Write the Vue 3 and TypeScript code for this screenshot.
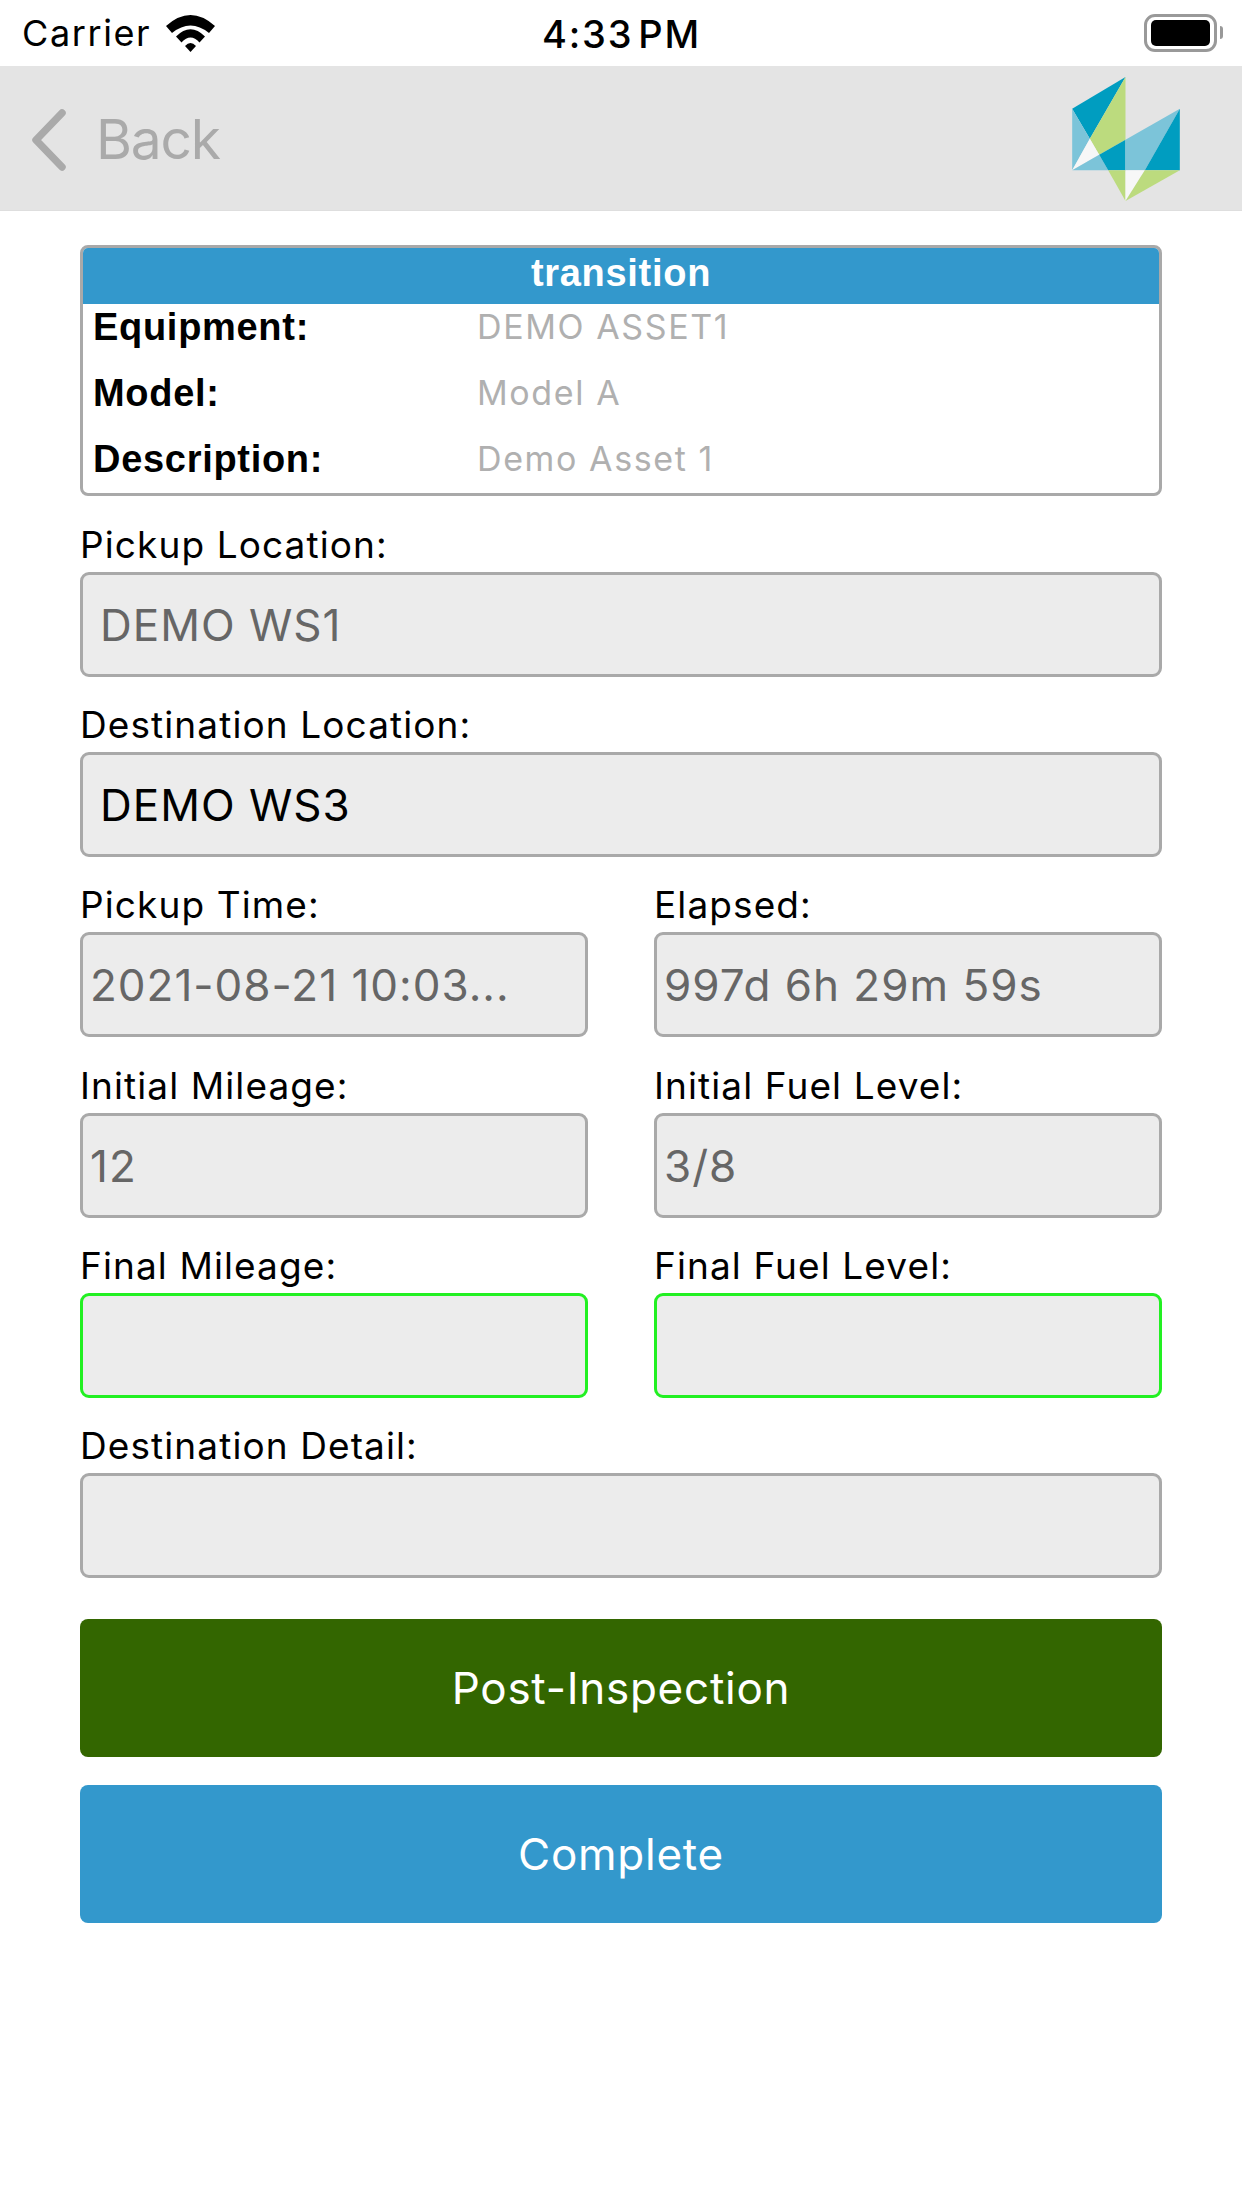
<script setup lang="ts">
interface Info { label: string; value: string }
const info: Info[] = [
  { label: 'Equipment:', value: 'DEMO ASSET1' },
  { label: 'Model:', value: 'Model A' },
  { label: 'Description:', value: 'Demo Asset 1' }
]
interface Field { label: string; value: string; tone?: string }
const rows: Field[][] = [
  [{ label: 'Pickup Time:', value: '2021-08-21 10:03...', tone: 'muted' }, { label: 'Elapsed:', value: '997d 6h 29m 59s', tone: 'muted' }],
  [{ label: 'Initial Mileage:', value: '12', tone: 'muted' }, { label: 'Initial Fuel Level:', value: '3/8', tone: 'muted' }],
  [{ label: 'Final Mileage:', value: '', tone: 'required' }, { label: 'Final Fuel Level:', value: '', tone: 'required' }]
]
</script>

<template>
  <div class="screen">
    <div class="status">
      <div class="status-left">
        <span class="carrier">Carrier</span>
        <svg class="wifi" viewBox="0 0 49 37" width="49" height="37">
          <path d="M0 11 Q24.5 -11 49 11 L43 18 Q24.5 3 6 18 Z" fill="#000" />
          <path d="M10 21.5 Q24.5 7 39 21.5 L33.5 27.5 Q24.5 17.5 15.5 27.5 Z" fill="#000" />
          <path d="M19 31 Q24.5 25 30 31 L24.5 37 Z" fill="#000" />
        </svg>
      </div>
      <span class="time">4:33 PM</span>
      <div class="battery"><div class="battery-fill"></div><div class="battery-cap"></div></div>
    </div>
    <header class="nav">
      <div class="back">
        <svg class="chevron" viewBox="0 0 40 64" width="40" height="64">
          <path d="M33 5 L7 32 L33 59" fill="none" stroke="#aaaaaa" stroke-width="7.5" stroke-linecap="round" stroke-linejoin="round" />
        </svg>
        <span class="back-text">Back</span>
      </div>
      <svg class="logo" viewBox="97 50 323 372" width="108" height="124">
        <polygon points="257,50 97,145 150,235" fill="#009dc0" />
        <polygon points="257,50 257,238 178,283 150,235" fill="#bcdb7e" />
        <polygon points="97,145 150,235 97,330" fill="#7cc4d9" />
        <polygon points="150,235 178,283 97,330" fill="#f7f7f7" />
        <polygon points="97,330 178,283 205,330" fill="#7cc4d9" />
        <polygon points="178,283 257,238 257,330 205,330" fill="#009dc0" />
        <polygon points="257,238 420,145 315,330 257,330" fill="#7cc4d9" />
        <polygon points="420,145 420,330 315,330" fill="#009dc0" />
        <polygon points="205,330 257,330 257,422" fill="#bcdb7e" />
        <polygon points="257,330 315,330 257,422" fill="#f7f7f7" />
        <polygon points="315,330 420,330 257,422" fill="#bcdb7e" />
      </svg>
    </header>
    <main class="content">
      <section class="card">
        <div class="card-title">transition</div>
        <div class="info-list">
          <div v-for="item in info" :key="item.label" class="info-row">
            <span class="info-label">{{ item.label }}</span>
            <span class="info-value">{{ item.value }}</span>
          </div>
        </div>
      </section>
      <div class="field pickup">
        <label class="field-label">Pickup Location:</label>
        <div class="box wide muted">DEMO WS1</div>
      </div>
      <div class="field">
        <label class="field-label">Destination Location:</label>
        <div class="box wide">DEMO WS3</div>
      </div>
      <div v-for="(row, i) in rows" :key="i" class="pair">
        <div v-for="f in row" :key="f.label" class="field">
          <label class="field-label">{{ f.label }}</label>
          <div class="box" :class="f.tone">{{ f.value }}</div>
        </div>
      </div>
      <div class="field">
        <label class="field-label">Destination Detail:</label>
        <div class="box wide"></div>
      </div>
      <button class="btn green first">Post-Inspection</button>
      <button class="btn blue">Complete</button>
    </main>
  </div>
</template>

<style scoped>
.screen {
  width: 1242px;
  height: 2208px;
  background: #fff;
  font-family: Inter, "Liberation Sans", sans-serif;
  color: #000;
  overflow: hidden;
}
.status {
  height: 66px;
  padding: 0 19px 0 22px;
  display: flex;
  align-items: center;
  justify-content: space-between;
  position: relative;
  box-sizing: border-box;
}
.status-left { display: flex; align-items: center; gap: 15px; }
.carrier { font-size: 36px; letter-spacing: 1.6px; }
.wifi { display: block; margin-top: 0; }
.time {
  position: absolute;
  left: 542px;
  top: 11px;
  font-size: 38px;
  font-weight: 500;
  letter-spacing: 1.8px;
  word-spacing: -7px;
}
.battery {
  width: 73px;
  height: 38px;
  border: 3px solid #999;
  border-radius: 11px;
  box-sizing: border-box;
  padding: 3px 4px;
  position: relative;
  margin-right: 6px;
}
.battery-fill { width: 100%; height: 100%; background: #000; border-radius: 5px; }
.battery-cap {
  position: absolute;
  right: -9px;
  top: 9px;
  width: 3px;
  height: 13px;
  background: #999;
  border-radius: 0 3px 3px 0;
}
.nav {
  height: 145px;
  background: #e4e4e4;
  display: flex;
  align-items: center;
  justify-content: space-between;
  padding: 0 62px 0 29px;
  box-sizing: border-box;
  border-bottom: 1px solid #dedede;
}
.back {
  display: flex;
  align-items: center;
  gap: 28px;
  color: #aaa;
  padding-top: 4px;
}
.back-text { font-size: 55px; letter-spacing: -1.2px; line-height: 64px; margin-top: -2px; margin-left: -1px; }
.chevron { display: block; }
.logo { display: block; margin-top: 2px; }
.content {
  padding: 34px 80px 0;
  display: flex;
  flex-direction: column;
}
.card {
  height: 251px;
  border: 3px solid #a9a9a9;
  border-radius: 8px;
  box-sizing: border-box;
  overflow: hidden;
}
.card-title {
  height: 56px;
  line-height: 50px;
  background: #3398cc;
  color: #fff;
  text-align: center;
  font-family: "Liberation Sans", Arial, sans-serif;
  font-weight: 700;
  font-size: 38px;
  letter-spacing: 0.7px;
}
.info-row {
  height: 66px;
  display: flex;
  align-items: center;
  padding-left: 10px;
}
.info-list { margin-top: -10px; }
.info-label {
  width: 384px;
  font-family: "Liberation Sans", Arial, sans-serif;
  font-weight: 700;
  font-size: 38px;
  letter-spacing: 0.7px;
}
.info-value { font-size: 34px; color: #b0b0b0; letter-spacing: 1.6px; margin-top: -1px; }
.field { display: flex; flex-direction: column; flex: 1; min-width: 0; }
.pickup { margin-top: 15px; }
.field-label {
  height: 61px;
  line-height: 67px;
  font-size: 37px;
  letter-spacing: 1.1px;
}
.box {
  height: 105px;
  border: 3px solid #a9a9a9;
  border-radius: 9px;
  background: #ececec;
  box-sizing: border-box;
  display: flex;
  align-items: center;
  padding-left: 7px;
  font-size: 44px;
  letter-spacing: 1px;
  white-space: nowrap;
  color: #000;
  margin-bottom: 14px;
}
.box.wide { padding-left: 17px; }
.muted { color: #666; }
.required { border-color: #22f022; }
.pair { display: flex; gap: 66px; }
.pair:nth-child(4) { margin-bottom: 1px; }
.btn {
  display: block;
  width: 100%;
  height: 138px;
  border: none;
  border-radius: 8px;
  color: #fff;
  font-family: Inter, "Liberation Sans", sans-serif;
  font-size: 44px;
  letter-spacing: 0.75px;
  padding: 0;
}
.btn.first { margin-top: 27px; }
.green { background: #336600; margin-bottom: 28px; }
.blue { background: #3398cc; }
</style>
